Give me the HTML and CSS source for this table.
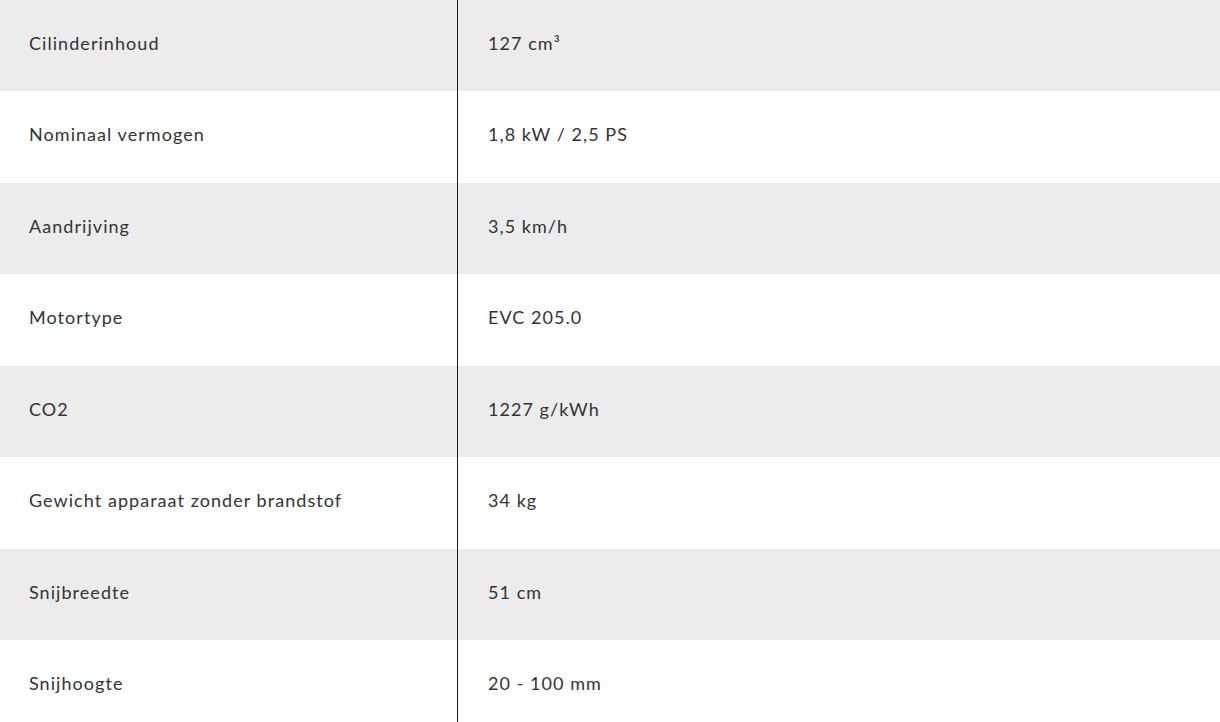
FILE: index.html
```html
<!DOCTYPE html>
<html lang="nl">
<head>
<meta charset="utf-8">
<link rel="stylesheet" href="styles.css">
</head>
<body>
<div class="specs">
  <div class="row"><div class="label">Cilinderinhoud</div><div class="value">127 cm³</div></div>
  <div class="row"><div class="label">Nominaal vermogen</div><div class="value">1,8 kW / 2,5 PS</div></div>
  <div class="row"><div class="label">Aandrijving</div><div class="value">3,5 km/h</div></div>
  <div class="row"><div class="label">Motortype</div><div class="value">EVC 205.0</div></div>
  <div class="row"><div class="label">CO2</div><div class="value">1227 g/kWh</div></div>
  <div class="row"><div class="label">Gewicht apparaat zonder brandstof</div><div class="value">34 kg</div></div>
  <div class="row"><div class="label">Snijbreedte</div><div class="value">51 cm</div></div>
  <div class="row"><div class="label">Snijhoogte</div><div class="value">20 - 100 mm</div></div>
</div>
</body>
</html>
```
FILE: styles.css
```css
html, body {
  margin: 0;
  padding: 0;
  background: #fff;
}
body {
  font-family: "Lato", "Noto Sans", sans-serif;
  font-size: 18px;
  letter-spacing: 1.05px;
  color: #333;
  overflow: hidden;
}
.specs {
  display: flex;
  flex-direction: column;
  width: 1220px;
}
.row {
  display: flex;
  height: 91.43px;
  box-sizing: border-box;
}
.row:nth-child(odd) {
  background: #ececec;
}
.label {
  width: 458px;
  box-sizing: border-box;
  padding: 31px 0 0 29px;
  border-right: 1px solid #1a1a1a;
  line-height: 24px;
}
.value {
  flex: 1;
  padding: 31px 0 0 30px;
  line-height: 24px;
}
```
